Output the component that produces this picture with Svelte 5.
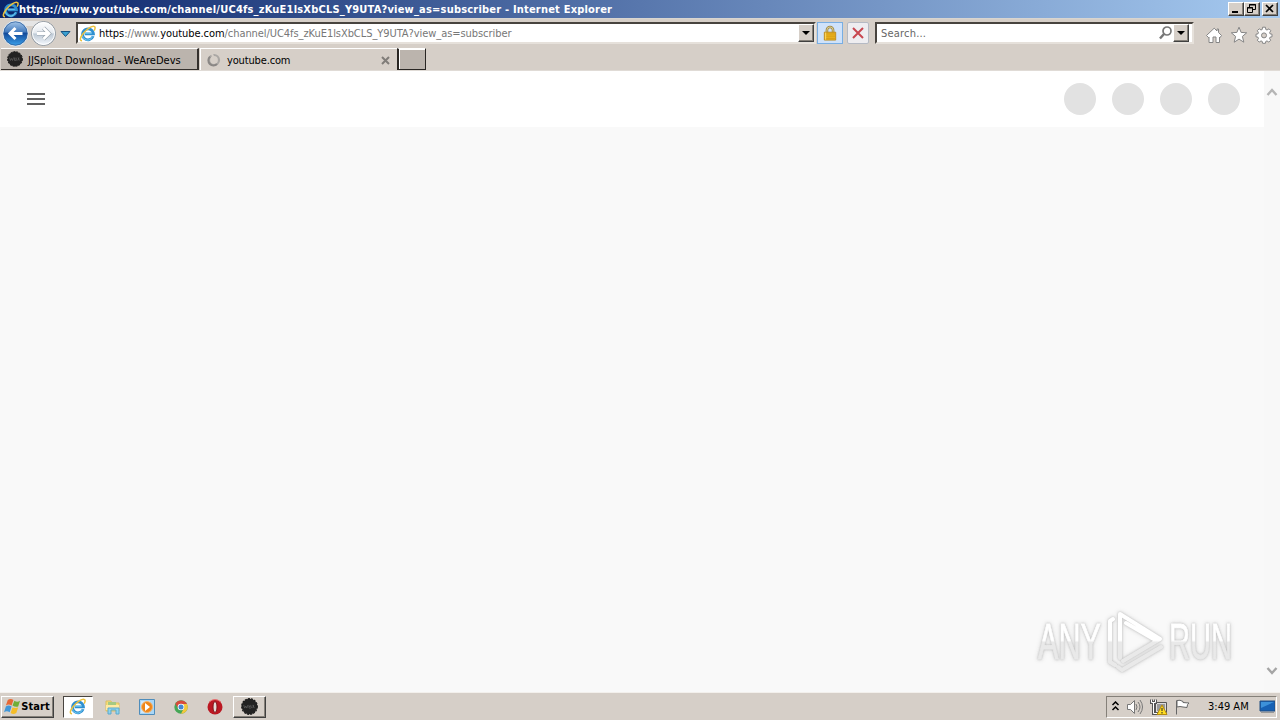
<script lang="ts">
	const avatars = [1, 2, 3, 4];
</script>

{#snippet ieIcon(size: number)}
	<svg class="icon" width={size} height={size} viewBox="0 0 18 18" fill="none">
		<path d="M15 11.8A5.8 5.8 0 1 1 15.3 9.3H6" stroke="#2f8fd0" stroke-width="2.9" />
		<path d="M14.2 12.2A5.4 5.4 0 0 1 3.8 9.3M5.5 8.7h8" stroke="#7ad3f6" stroke-width="1" />
		<path
			d="M3.2 16.8C.2 16.7 1.3 12.7 4.7 8.7 8.7 4 14.4.2 16.4 1.7c1.2.9.5 2.7-.4 4.2"
			stroke="#ecc03c"
			stroke-width="1.6"
		/>
	</svg>
{/snippet}

{#snippet badge(size: number)}
	<svg class="icon" width={size} height={size} viewBox="0 0 16 16">
		<circle cx="8" cy="8" r="7.3" fill="#222" />
		<circle cx="8" cy="8" r="7.4" fill="none" stroke="#181818" stroke-dasharray="2 1" />
		<path d="m2.5 6.5 1 3 1-2 1 2 1-3m1 0v3h2m-2-1.5h1.5m3-1.5-1 3m-2-3 1 3m1-3 1.5 3" fill="none" stroke="#666" stroke-width=".6" />
	</svg>
{/snippet}

<div class="screen">
	<header class="titlebar">
		{@render ieIcon(17)}
		<span class="title">https://www.youtube.com/channel/UC4fs_zKuE1lsXbCLS_Y9UTA?view_as=subscriber - Internet Explorer</span>
		<div class="window-buttons">
			<button class="raised" aria-label="Minimize">
				<svg width="12" height="10"><path d="M2 8h6" stroke="#000" stroke-width="2" /></svg>
			</button>
			<button class="raised" aria-label="Restore">
				<svg width="12" height="10" fill="none" stroke="#000">
					<path d="M3.5 3V.5h6v5H7M3 1h7M1.5 3.5h5v5h-5zM1 4h6" />
				</svg>
			</button>
			<button class="raised close" aria-label="Close">
				<svg width="12" height="10"><path d="m2 1 7 7m0-7L2 8" stroke="#000" stroke-width="1.7" /></svg>
			</button>
		</div>
	</header>

	<div class="navbar">
		<svg class="history" width="76" height="30" viewBox="0 0 76 30">
			<defs>
				<linearGradient id="back" x2="0" y2="1">
					<stop stop-color="#a8c9eb" />
					<stop offset=".42" stop-color="#487ebf" />
					<stop offset=".5" stop-color="#124b9c" />
					<stop offset="1" stop-color="#3da5ee" />
				</linearGradient>
				<linearGradient id="forward" x2="0" y2="1">
					<stop stop-color="#fff" />
					<stop offset=".48" stop-color="#e4e9ef" />
					<stop offset=".52" stop-color="#bdc9d5" />
					<stop offset="1" stop-color="#f7faff" />
				</linearGradient>
			</defs>
			<path d="M15 3h28v5H15z" fill="#e5e5e5" />
			<circle cx="43.5" cy="15.5" r="12" fill="url(#forward)" stroke="#8d969f" />
			<circle cx="43.5" cy="15.5" r="11" fill="none" stroke="#fff" />
			<circle cx="15.5" cy="15.5" r="12.5" fill="url(#back)" stroke="#e8eef4" />
			<circle cx="15.5" cy="15.5" r="11.7" fill="none" stroke="#2c5e9c" stroke-width=".8" />
			<path d="M22.5 15.5H10m5.5-5.5L10 15.5l5.5 5.5" fill="none" stroke="#fff" stroke-width="3" />
			<path d="M37 15.5h12m-5.5-5.5 5.5 5.5-5.5 5.5" fill="none" stroke="#97a2ad" stroke-width="4" />
			<path d="M37 15.5h12m-5.5-5.5 5.5 5.5-5.5 5.5" fill="none" stroke="#fff" stroke-width="2.8" />
			<path d="M61 13.5h9l-4.5 5z" fill="#3aa0d0" stroke="#155181" />
		</svg>
		<div class="field address">
			{@render ieIcon(17)}
			<span class="url"><b>https</b>://www.<b>youtube.com</b>/channel/UC4fs_zKuE1lsXbCLS_Y9UTA?view_as=subscriber</span>
			<button class="raised drop" aria-label="Show addresses">
				<svg width="9" height="5"><path d="M0 0h8L4 4z" /></svg>
			</button>
		</div>
		<button class="lock" aria-label="Security report">
			<svg width="14" height="17" viewBox="0 0 16 18">
				<path d="M4.5 8V5a3.5 3.5 0 0 1 7 0v3" fill="none" stroke="#9c8748" stroke-width="3" />
				<path d="M4.5 8V5a3.5 3.5 0 0 1 7 0v3" fill="none" stroke="#e4d797" />
				<path d="M1.5 7.5h13v9h-13z" fill="#efb51b" stroke="#b9871c" />
				<path d="M2 9.5h12M2 12h12M2 14.5h12" stroke="#cf9719" />
				<path d="M3 8v8" stroke="#ffe075" />
			</svg>
		</button>
		<button class="stop" aria-label="Stop">
			<svg width="12" height="12"><path d="m1 1 10 10M11 1 1 11" stroke="#c84750" stroke-width="2" /></svg>
		</button>
		<div class="field search">
			<span class="placeholder">Search...</span>
			<svg class="icon" width="15" height="16" viewBox="0 0 15 16" fill="none" stroke="#777">
				<circle cx="9" cy="6" r="4" stroke-width="1.7" />
				<path d="m6 9-4 4.5" stroke-width="2.5" />
			</svg>
			<button class="raised drop" aria-label="Search options">
				<svg width="9" height="5"><path d="M0 0h8L4 4z" /></svg>
			</button>
		</div>
		<div class="tools">
			<svg width="18" height="18" viewBox="0 0 18 18" fill="#fff" stroke="#858585">
				<path d="m1.5 9.5 2 2 .5-.5v5.5h4V11h3v5.5h3.5V11l.5.5 1.5-2-3-3V3H12v2L9.2 2.2z" />
			</svg>
			<svg width="18" height="18" viewBox="0 0 18 18" fill="#fff" stroke="#858585">
				<path d="m9 1.2 2.1 5.2 5.6.4-4.3 3.6 1.4 5.8L9 13.1l-4.8 3.1 1.4-5.8-4.3-3.6 5.6-.4z" />
			</svg>
			<svg width="18" height="18" viewBox="0 0 18 18" fill="#fff" stroke="#858585">
				<path
					d="m7.6 1.2 2.8 0 .4 2.3 1.2.5L14 2.8l1.8 1.9-1.2 2 .4 1.1 2 .4v2.6l-2 .4-.5 1.2 1.2 1.8-1.9 1.9-1.8-1.2-1.2.5-.4 1.9H7.6l-.4-1.9-1.2-.5-1.8 1.2-1.9-1.9 1.2-1.8-.5-1.2-2-.4V8.2l2-.4.5-1.1-1.2-2 1.9-1.9L6 4l1.2-.5z"
				/>
				<circle cx="9" cy="9.4" r="2.5" fill="#d6cfc8" />
			</svg>
		</div>
	</div>

	<div class="tabs">
		<div class="tab inactive">
			{@render badge(16)}
			<span class="tab-title">JJSploit Download - WeAreDevs</span>
		</div>
		<div class="tab active">
			<svg class="icon" width="14" height="14" viewBox="0 0 14 14" fill="none">
				<circle cx="7" cy="7" r="5" stroke="#aaa7a4" stroke-width="2.2" />
				<path d="M3 3.8A5 5 0 0 0 10 11" stroke="#8a8785" stroke-width="2.2" />
				<path d="m4.5 0 1.8 4" stroke="#d6cfc8" stroke-width="2" />
			</svg>
			<span class="site">youtube.com</span>
			<svg class="tab-close" width="9" height="9"><path d="m1 1 7 7m0-7L1 8" stroke="#807d79" stroke-width="2" /></svg>
		</div>
		<div class="new-tab"></div>
	</div>

	<main>
		<div class="page">
			<div class="masthead">
				<div class="menu"><i></i><i></i><i></i></div>
				<div class="avatars">
					{#each avatars as avatar (avatar)}
						<span></span>
					{/each}
				</div>
			</div>
		</div>
		<div class="scrollbar">
			<svg width="12" height="10"><path d="m1.5 8 4.5-5 4.5 5" fill="none" stroke="#b5b5b5" stroke-width="2.4" /></svg>
			<svg width="12" height="10"><path d="m1.5 2 4.5 5 4.5-5" fill="none" stroke="#a5a5a5" stroke-width="2.4" /></svg>
		</div>
		<svg class="watermark" width="208" height="72" viewBox="0 0 208 72">
			<defs>
				<linearGradient id="shine" gradientUnits="userSpaceOnUse" x1="0" x2="0" y1="0" y2="72">
					<stop offset=".49" stop-color="#fff" />
					<stop offset=".52" stop-color="#e9e9e9" />
				</linearGradient>
			</defs>
			<g class="wordmark" fill="url(#shine)" stroke="url(#shine)" stroke-width=".8">
				<text x="6" y="54" textLength="63" lengthAdjust="spacingAndGlyphs">ANY</text>
				<text x="137" y="54" textLength="63" lengthAdjust="spacingAndGlyphs">RUN</text>
			</g>
			<g fill="none" stroke="url(#shine)" stroke-width="4" stroke-linejoin="round" stroke-linecap="round">
				<path d="M81 14l-3 2v41l5 3M88 53V9l40 25-37 22M94 18l31 18M129 42 90 65l-4-3" />
			</g>
		</svg>
	</main>

	<footer class="taskbar">
		<button class="raised start">
			<svg width="17" height="17" viewBox="0 0 18 18">
				<path d="M4 2q3-2 6 0L8 8Q5 6 2 8z" fill="#e76834" />
				<path d="M11 3q3 2 6 0l-2 6q-3 1-6-1z" fill="#71ae37" />
				<path d="M2 9q3-2 6 0l-2 6q-3-2-6 0z" fill="#4197d8" />
				<path d="M9 10q3 1 6 0l-2 6q-3 2-6 0z" fill="#f5bd28" />
			</svg>
			<b>Start</b>
		</button>
		<div class="task-ie">{@render ieIcon(17)}</div>
		<div class="launchers">
			<svg width="18" height="18" viewBox="0 0 18 18">
				<path d="M2 3h5l1 2h7v8H2z" fill="#f6df78" stroke="#dbbd62" />
				<path d="M4 4h8v5H4z" fill="#a5c982" />
				<path d="M2 7h13v5H2z" fill="#ffeaa2" />
				<path d="M4 16v-6h11v6h-3v-4H7v4z" fill="#8ed3ef" stroke="#5ba9cc" />
			</svg>
			<svg width="18" height="18" viewBox="0 0 18 18">
				<path d="M1.5 1.5h15v15h-15z" fill="#a9d6f6" stroke="#4f8dbb" />
				<path d="M3 3h9v12H3z" fill="#cfe7f9" />
				<circle cx="9" cy="9" r="5.5" fill="#ef8618" stroke="#f6b36b" />
				<path d="m7 5 5 4-5 4z" fill="#fff" />
			</svg>
			<svg width="18" height="18" viewBox="0 0 18 18">
				<circle cx="9" cy="9" r="6.7" fill="#46a656" />
				<path d="M3.3 5.8A6.7 6.7 0 0 1 15 6H9a3 3 0 0 0-2.6 4.5z" fill="#d84a3b" />
				<path d="M15 6a6.7 6.7 0 0 1-6 9.7l2.7-5.2A3 3 0 0 0 9 6z" fill="#f4c83c" />
				<circle cx="9" cy="9" r="3.3" fill="#fff" />
				<circle cx="9" cy="9" r="2.5" fill="#4487d1" />
			</svg>
			<svg width="18" height="18" viewBox="0 0 18 18">
				<circle cx="9" cy="9" r="7.5" fill="#bb1822" />
				<path d="M3 4q6-5 12 0" fill="none" stroke="#e97272" />
				<ellipse cx="9" cy="9" rx="2" ry="5.5" fill="#e5dcd6" stroke="#811218" />
			</svg>
		</div>
		<button class="raised task-app" aria-label="JJSploit">{@render badge(17)}</button>
		<div class="tray">
			<svg width="9" height="11" fill="none" stroke="#000" stroke-width="1.5"><path d="m1.5 4 3-3 3 3m-6 5 3-3 3 3" /></svg>
			<svg width="18" height="16" viewBox="0 0 18 16" fill="none" stroke="#777">
				<path d="M1.5 5.5h3l4-4v13l-4-4h-3z" fill="#fff" />
				<path d="M10 5q2 3 0 6m2-8q4 5 0 10m2-12q5 7 0 14" />
			</svg>
			<svg width="18" height="18" viewBox="0 0 18 18">
				<path d="M5.5 4.5h11v10h-11z" fill="#ddd" stroke="#555" />
				<path d="M7 6h8v7H7z" fill="#999" />
				<path d="M1.5 1.5v3h4v-3M3.5 5v10.5h4" fill="none" stroke="#555" stroke-width="3" />
				<path d="M1.5 1.5v3h4v-3M3.5 5v10.5h4" fill="none" stroke="#fff" />
				<path d="m12 7 5 9.5H7z" fill="#ffdd22" stroke="#b58b0e" />
				<path d="M12 10v3m0 1v1.5" stroke="#222" />
			</svg>
			<svg width="18" height="16" viewBox="0 0 18 16" fill="#fff" stroke="#666">
				<path d="M2.5 1.5v14M3 1.5q3-1 6 1v1l6 .5q-2 1-2 4.5L9 8q-3-1-6 0z" />
			</svg>
			<time>3:49 AM</time>
			<svg class="desktop" width="16" height="14" viewBox="0 0 16 14">
				<path d="M1 1h15v10H1z" fill="#1761b4" stroke="#234f81" />
				<path d="M2 2h13L2 8z" fill="#3d91d9" />
				<path d="M2 12.5h13" stroke="#999" />
			</svg>
		</div>
	</footer>
</div>

<style>
	:global(body) {
		margin: 0;
		overflow: hidden;
	}

	.screen {
		display: flex;
		flex-direction: column;
		width: 1280px;
		height: 720px;
		background: #d6cfc8;
		color: #000;
		font: 11px/14px 'DejaVu Sans Condensed', 'DejaVu Sans', sans-serif;
		font-stretch: condensed;
	}

	* {
		box-sizing: border-box;
	}

	svg {
		display: block;
		flex: none;
	}

	button {
		display: flex;
		align-items: center;
		justify-content: center;
		padding: 0;
		font: inherit;
		color: inherit;
	}

	span,
	time {
		white-space: nowrap;
	}

	.raised {
		background: #d6cfc8;
		border: 1px solid;
		border-color: #fff #404040 #404040 #fff;
		box-shadow: inset -1px -1px #858079;
	}

	.titlebar {
		display: flex;
		align-items: center;
		height: 18px;
		padding: 0 2px;
		background: linear-gradient(90deg, #0a246a, #a6caf0);
		color: #fff;
	}

	.title {
		padding-top: 1px;
		font-weight: bold;
		letter-spacing: 0.2px;
	}

	.window-buttons {
		display: flex;
		margin-left: auto;
	}

	.window-buttons button {
		width: 16px;
		height: 14px;
	}

	.window-buttons .close {
		margin-left: 2px;
	}

	.navbar {
		display: flex;
		height: 30px;
		border-top: 1px solid #d8d5d0;
	}

	.history {
		margin-top: -1px;
	}

	.field {
		display: flex;
		align-items: center;
		height: 22px;
		margin-top: 3px;
		background: #fff;
		border: 2px solid;
		border-color: #48443f #e6e1db #e6e1db #48443f;
	}

	.address {
		width: 740px;
		padding-left: 1px;
	}

	.url {
		flex: 1;
		padding-top: 2px;
		margin-left: 3px;
		color: #777;
		letter-spacing: -0.06px;
	}

	.url b {
		font-weight: normal;
		color: #000;
	}

	.drop {
		width: 16px;
		height: 18px;
	}

	.lock,
	.stop {
		width: 26px;
		height: 22px;
		margin: 3px 0 0 1px;
		background: #cfe2fa;
		border: 1px solid #78aee3;
	}

	.stop {
		width: 22px;
		margin-left: 4px;
		background: #eeedf0;
		border-color: #b5bac4;
		border-radius: 2px;
	}

	.search {
		width: 319px;
		margin-left: 6px;
		padding: 0 3px 0 4px;
		color: #666;
	}

	.placeholder {
		padding-top: 2px;
		letter-spacing: 0.2px;
	}

	.search .icon {
		margin-left: auto;
	}

	.tools {
		display: flex;
		gap: 7px;
		margin: 7px 0 0 11px;
	}

	.tabs {
		display: flex;
		height: 23px;
		padding: 0 0 0 1px;
		border-bottom: 1px solid #e0dbd6;
	}

	.tab {
		display: flex;
		align-items: center;
		width: 198px;
		height: 22px;
		padding-left: 6px;
		border-top: 1px solid #fff;
	}

	.inactive {
		background: #bbb4ad;
		border-right: 2px solid #34302c;
		border-bottom: 1px solid #34302c;
	}

	.tab-title {
		padding-top: 3px;
		margin-left: 5px;
	}

	.active {
		margin-left: 1px;
		border-left: 1px solid #fff;
	}

	.site {
		padding-top: 2px;
		margin-left: 6px;
		letter-spacing: -0.15px;
	}

	.tab-close {
		margin: 1px 8px 0 auto;
	}

	.new-tab {
		width: 29px;
		height: 22px;
		margin-left: -1px;
		background: #bbb4ad;
		border: 1px solid #292623;
		border-top-color: #fff;
		border-left-width: 2px;
		box-shadow: inset 1px 1px #fff;
	}

	main {
		position: relative;
		display: flex;
		height: 621px;
		background: #f9f9f9;
	}

	.page {
		flex: 1;
	}

	.masthead {
		display: flex;
		align-items: center;
		justify-content: space-between;
		height: 56px;
		padding: 0 24px 0 27px;
		background: #fff;
	}

	.menu {
		display: grid;
		gap: 3px;
		width: 18px;
	}

	.menu i {
		height: 2px;
		background: #606060;
	}

	.avatars {
		display: flex;
		gap: 16px;
	}

	.avatars span {
		width: 32px;
		height: 32px;
		background: #e2e2e2;
		border-radius: 50%;
	}

	.scrollbar {
		display: flex;
		flex-direction: column;
		align-items: center;
		justify-content: space-between;
		width: 16px;
		padding: 16px 0 16px;
		background: #f8f8f8;
	}

	.watermark {
		position: absolute;
		right: 40px;
		bottom: 15px;
		overflow: visible;
		filter: drop-shadow(0 0 1px #bbb) drop-shadow(0 0 2px #ddd);
	}

	.wordmark {
		font: 50px 'Liberation Sans', sans-serif;
	}

	.taskbar {
		display: flex;
		align-items: center;
		height: 28px;
		padding: 1px 3px 1px 1px;
		border-top: 1px solid #f3f0ec;
	}

	.start {
		width: 53px;
		height: 22px;
		padding-right: 1px;
	}

	.start b {
		letter-spacing: 0.1px;
	}

	.task-ie {
		display: grid;
		place-items: center;
		width: 30px;
		height: 22px;
		padding-right: 2px;
		margin-left: 9px;
		background: #fff;
		border: 1px solid;
		border-color: #494540 #fff #fff #494540;
	}

	.launchers {
		display: flex;
		gap: 16px;
		margin-left: 11px;
	}

	.task-app {
		width: 33px;
		height: 22px;
		margin-left: 9px;
	}

	.tray {
		display: flex;
		align-items: center;
		width: 171px;
		height: 22px;
		margin-left: auto;
		padding-left: 4px;
		border: 1px solid;
		border-color: #858079 #fff #fff #858079;
		gap: 6px;
	}

	.tray time {
		margin-left: 10px;
	}

	.desktop {
		margin-left: 4px;
	}
</style>
